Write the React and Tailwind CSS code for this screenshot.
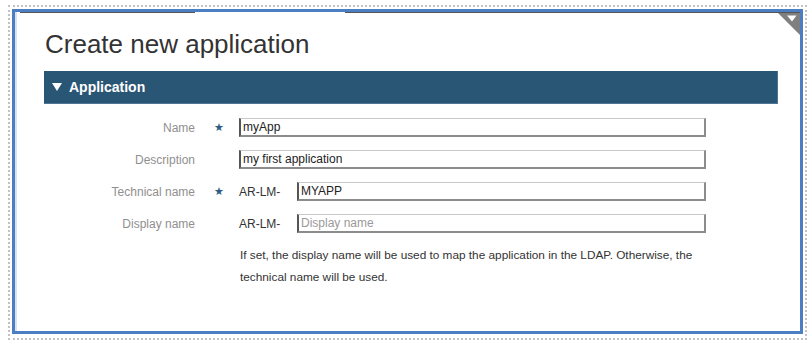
import React from "react";

const fields = [
  { label: "Name", required: true, value: "myApp" },
  { label: "Description", required: false, value: "my first application" },
  { label: "Technical name", required: true, prefix: "AR-LM-", value: "MYAPP" },
  { label: "Display name", required: false, prefix: "AR-LM-", placeholder: "Display name" },
];

const inputCls =
  "h-[19px] pl-[2px] text-[12px] text-[#222] bg-white outline-none border-l-2 border-l-[#555] border-t border-t-[#c8c8c8] border-r-2 border-r-[#8c8c8c] border-b-2 border-b-[#8c8c8c] placeholder:text-[#9a9a9a] font-['Liberation_Sans',Arial,sans-serif]";

const App = () => {
  return (
    <div className="min-h-screen bg-white pl-[8px] pt-[5px] font-['Liberation_Sans',Arial,sans-serif]">
      <div className="h-[335px] w-[799px] border-2 border-dotted border-[#c2c2c2] p-[2px]">
        <div className="relative h-[325px] w-[791px] border-[3px] border-[#4b7ec3] bg-white">
          <div className="h-full border-l-2 border-[#d6e3f2]">
            {/* top rule */}
            <div className="flex h-px">
              <div className="ml-[3px] w-[175px] bg-[#555]" />
              <div className="ml-[150px] flex-1 bg-[#555]" />
            </div>

            <h1 className="mt-[18px] pl-[28px] text-[26px] leading-[26px] text-[#333]">
              Create new application
            </h1>

            <div className="ml-[27px] mt-[14px] flex h-[33px] w-[734px] items-center gap-[7px] border-r border-b border-[#4f7592] bg-[#2a5676] pl-[8px]">
              <svg width="10" height="8" viewBox="0 0 10 8">
                <polygon points="0,0 10,0 5,8" fill="#fff" />
              </svg>
              <span className="text-[14px] font-bold text-white">Application</span>
            </div>

            <div className="mt-[14px] flex flex-col gap-[13px]">
              {fields.map((f) => (
                <div key={f.label} className="flex h-[19px] items-center">
                  <div className="w-[178px] text-right text-[12px] text-[#8f8f8f]">{f.label}</div>
                  <div className="w-[44px] pl-[19px] text-[11px] leading-none text-[#2d5b82] font-['DejaVu_Sans',sans-serif]">
                    {f.required ? "★" : ""}
                  </div>
                  {f.prefix ? (
                    <div className="flex items-center">
                      <span className="w-[58px] text-[12px] text-[#333]">{f.prefix}</span>
                      <input
                        readOnly
                        defaultValue={f.value}
                        placeholder={f.placeholder}
                        className={inputCls + " w-[409px]"}
                      />
                    </div>
                  ) : (
                    <input readOnly defaultValue={f.value} className={inputCls + " w-[467px]"} />
                  )}
                </div>
              ))}
            </div>

            <p className="ml-[223px] mt-[11px] w-[470px] text-[11.8px] leading-[22px] text-[#333]">
              If set, the display name will be used to map the application in the LDAP. Otherwise, the
              technical name will be used.
            </p>
          </div>

          {/* corner fold */}
          <svg className="absolute right-0 top-px" width="22" height="22" viewBox="0 0 22 22">
            <polygon points="0,0 22,0 22,22" fill="#7f7f7f" />
            <polygon points="9,2.5 18.5,2.5 14,8.5" fill="#fff" />
          </svg>
        </div>
      </div>
    </div>
  );
};

export default App;
